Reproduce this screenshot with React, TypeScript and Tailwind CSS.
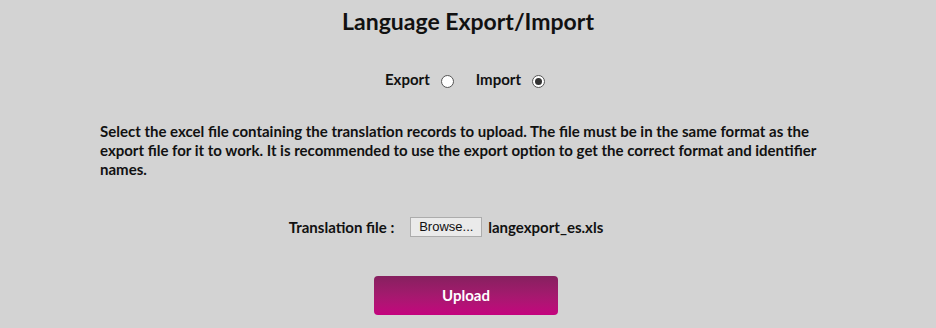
export default function App() {
  return (
    <div className="min-h-[328px] w-full bg-[#d3d3d3] text-[#111] font-['Lato','Open_Sans',sans-serif]">
      <h1 className="pt-[8px] text-center text-[23px] font-bold leading-[27px] text-[#111]">Language Export/Import</h1>

      <div className="mt-[33px] flex items-center justify-center gap-[18px] pr-[6px] text-[15px] font-bold">
        <label className="flex items-center gap-[11px]">
          <span>Export</span>
          <span className="mt-[5px] inline-block h-[13px] w-[13px] rounded-full border border-[#555] bg-white" />
        </label>
        <label className="ml-[4px] flex items-center gap-[11px]">
          <span>Import</span>
          <span className="mt-[5px] flex h-[13px] w-[13px] items-center justify-center rounded-full border border-[#555] bg-white">
            <span className="h-[7px] w-[7px] rounded-full bg-[#333]" />
          </span>
        </label>
      </div>

      <p className="mx-[100px] mt-[31px] max-w-[736px] text-[15px] font-bold leading-[19px]">
        Select the excel file containing the translation records to upload. The file must be in the same format as the
        export file for it to work. It is recommended to use the export option to get the correct format and identifier
        names.
      </p>

      <div className="mt-[37px] flex items-center justify-center gap-[16px] pr-[44px] text-[15px] font-bold">
        <span>Translation file :</span>
        <div className="flex items-center gap-[6px]">
          <button className="h-[20px] w-[72px] border border-[#acacac] bg-[#eaeaea] text-[13px] font-normal leading-[18px] text-[#111] font-['Liberation_Sans',sans-serif]">
            Browse...
          </button>
          <span>langexport_es.xls</span>
        </div>
      </div>

      <div className="mt-[38px] flex justify-center pr-[4px]">
        <button className="h-[39px] w-[184px] rounded-[4px] bg-gradient-to-b from-[#86205f] to-[#c4027e] text-[15px] font-bold text-white">
          Upload
        </button>
      </div>
    </div>
  );
}
